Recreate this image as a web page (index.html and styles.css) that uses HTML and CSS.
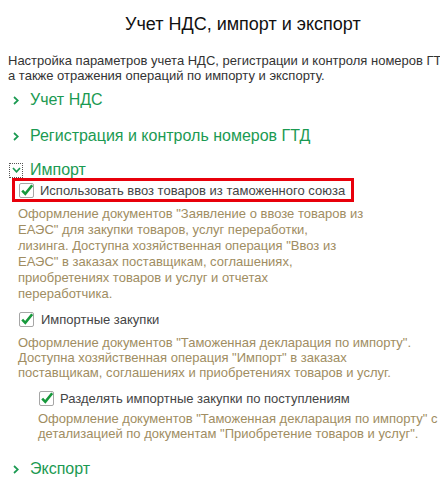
FILE: index.html
```html
<!DOCTYPE html>
<html lang="ru">
<head>
<meta charset="utf-8">
<title>Учет НДС, импорт и экспорт</title>
<link rel="stylesheet" href="styles.css">
</head>
<body>
<div class="page">
  <h1 class="title">Учет НДС, импорт и экспорт</h1>
  <p class="intro">Настройка параметров учета НДС, регистрации и контроля номеров ГТД,<br>а также отражения операций по импорту и экспорту.</p>

  <div class="group g-vat">
    <span class="chev"><svg width="6" height="9" viewBox="0 0 6 9"><polyline points="1,1 4.8,4.5 1,8" /></svg></span>
    <span class="group-title">Учет НДС</span>
  </div>

  <div class="group g-reg">
    <span class="chev"><svg width="6" height="9" viewBox="0 0 6 9"><polyline points="1,1 4.8,4.5 1,8" /></svg></span>
    <span class="group-title">Регистрация и контроль номеров ГТД</span>
  </div>

  <div class="group g-imp">
    <span class="chev focus"><svg width="9" height="6" viewBox="0 0 9 6"><polyline points="1,1 4.5,4.8 8,1" /></svg></span>
    <span class="group-title">Импорт</span>
  </div>

  <div class="highlight">
    <span class="check"><svg width="15" height="15" viewBox="0 0 15 15"><path d="M3.2 7.6 L6.3 10.8 L13.2 2.2" /></svg></span>
    <span class="label">Использовать ввоз товаров из таможенного союза</span>
  </div>
  <p class="hint h1">Оформление документов "Заявление о ввозе товаров из<br>ЕАЭС" для закупки товаров, услуг переработки,<br>лизинга. Доступна хозяйственная операция "Ввоз из<br>ЕАЭС" в заказах поставщикам, соглашениях,<br>приобретениях товаров и услуг и отчетах<br>переработчика.</p>

  <div class="row r2">
    <span class="check"><svg width="15" height="15" viewBox="0 0 15 15"><path d="M3.2 7.6 L6.3 10.8 L13.2 2.2" /></svg></span>
    <span class="label">Импортные закупки</span>
  </div>
  <p class="hint h2">Оформление документов "Таможенная декларация по импорту".<br>Доступна хозяйственная операция "Импорт" в заказах<br>поставщикам, соглашениях и приобретениях товаров и услуг.</p>

  <div class="row r3">
    <span class="check"><svg width="15" height="15" viewBox="0 0 15 15"><path d="M3.2 7.6 L6.3 10.8 L13.2 2.2" /></svg></span>
    <span class="label">Разделять импортные закупки по поступлениям</span>
  </div>
  <p class="hint h3">Оформление документов "Таможенная декларация по импорту" с<br>детализацией по документам "Приобретение товаров и услуг".</p>

  <div class="group g-exp">
    <span class="chev"><svg width="6" height="9" viewBox="0 0 6 9"><polyline points="1,1 4.8,4.5 1,8" /></svg></span>
    <span class="group-title">Экспорт</span>
  </div>
</div>
</body>
</html>
```

FILE: styles.css
```css
html, body {
  margin: 0;
  padding: 0;
  background: #ffffff;
}

body {
  font-family: "Liberation Sans", Arial, sans-serif;
  width: 440px;
  height: 483px;
  overflow: hidden;
}

.page {
  padding-top: 14px;
}

.title {
  margin: 0;
  padding-left: 125px;
  font-size: 18px;
  line-height: 21px;
  font-weight: normal;
  color: #111111;
}

.intro {
  margin: 18px 0 0 0;
  padding-left: 8px;
  font-size: 13px;
  line-height: 15px;
  color: #333333;
  white-space: nowrap;
}

.group {
  display: flex;
  align-items: center;
  height: 18px;
  padding-left: 9px;
}

.g-vat { margin-top: 8px; }
.g-reg { margin-top: 18px; }
.g-imp { margin-top: 16px; }
.g-exp { margin-top: 19px; }

.chev {
  width: 14px;
  height: 15px;
  box-sizing: border-box;
  display: flex;
  align-items: center;
  justify-content: center;
  margin-right: 7px;
}

.chev svg polyline {
  fill: none;
  stroke: #1b9a52;
  stroke-width: 1.7;
}

.chev.focus {
  outline: 1px dotted #555555;
  outline-offset: -1px;
}

.group-title {
  font-size: 16px;
  line-height: 18px;
  color: #1b9a52;
}

.highlight {
  display: flex;
  align-items: center;
  width: fit-content;
  height: 18px;
  margin: -1px 0 0 12px;
  padding: 0 6px 0 4px;
  border: 3px solid #e8000b;
}

.row {
  display: flex;
  align-items: center;
  height: 15px;
}

.r2 { margin-top: 10px; padding-left: 19px; }
.r3 { margin-top: 11px; padding-left: 39px; }

.check {
  width: 15px;
  height: 15px;
  box-sizing: border-box;
  border: 1px solid #a6a6a6;
  border-radius: 2px;
  background: #ffffff;
  margin-right: 6px;
  flex: none;
  position: relative;
}

.check svg {
  position: absolute;
  left: -1px;
  top: -1px;
  overflow: visible;
}

.check svg path {
  fill: none;
  stroke: #17993c;
  stroke-width: 2.6;
  stroke-linecap: butt;
  stroke-linejoin: miter;
}

.r2 .check { margin-right: 7px; }

.label {
  font-size: 13px;
  line-height: 15px;
  color: #444444;
  white-space: nowrap;
}

.hint {
  margin: 0;
  font-size: 13px;
  color: #a08d62;
  white-space: nowrap;
}

.hint.h1 {
  margin-top: 4px;
  padding-left: 18px;
  line-height: 16px;
}

.hint.h2 {
  margin-top: 8px;
  padding-left: 18px;
  line-height: 15px;
}

.hint.h3 {
  margin-top: 5px;
  padding-left: 38px;
  line-height: 15px;
}
```
